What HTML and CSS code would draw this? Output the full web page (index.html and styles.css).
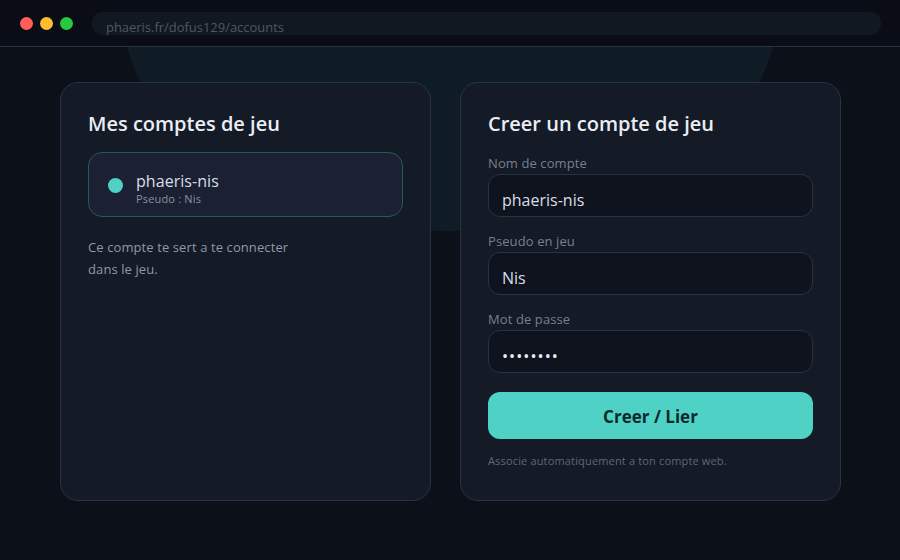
FILE: index.html
```html
<!DOCTYPE html>
<html lang="fr">
<head>
<meta charset="utf-8">
<title>Comptes de jeu</title>
<link rel="stylesheet" href="styles.css">
</head>
<body>
<div class="window">
  <header class="topbar">
    <span class="dot dot-red"></span>
    <span class="dot dot-yellow"></span>
    <span class="dot dot-green"></span>
    <div class="url">phaeris.fr/dofus129/accounts</div>
  </header>
  <main class="content">
    <div class="glow"></div>
    <section class="card card-list">
      <h2>Mes comptes de jeu</h2>
      <div class="account">
        <span class="status"></span>
        <div>
          <div class="account-name">phaeris-nis</div>
          <div class="account-sub">Pseudo : Nis</div>
        </div>
      </div>
      <p class="info">Ce compte te sert a te connecter<br>dans le jeu.</p>
    </section>
    <section class="card card-form">
      <h2>Creer un compte de jeu</h2>
      <div class="label">Nom de compte</div>
      <div class="field">phaeris-nis</div>
      <div class="label">Pseudo en jeu</div>
      <div class="field">Nis</div>
      <div class="label">Mot de passe</div>
      <div class="field field-secret">••••••••</div>
      <div class="button">Creer / Lier</div>
      <div class="hint">Associe automatiquement a ton compte web.</div>
    </section>
  </main>
</div>
</body>
</html>
```

FILE: styles.css
```css
* { box-sizing: border-box; }
html, body { margin: 0; height: 100%; }
body { background: #0c1019; font-family: "Open Sans", sans-serif; overflow: hidden; }
.window { width: 900px; height: 560px; display: flex; flex-direction: column; }
.topbar { height: 47px; flex: none; background: #0a0d15; border-bottom: 1px solid #263445; display: flex; align-items: flex-start; padding: 17px 0 0 20px; gap: 7px; }
.dot { width: 13px; height: 13px; border-radius: 50%; flex: none; }
.dot-red { background: #ff5f57; }
.dot-yellow { background: #febc2e; }
.dot-green { background: #28c840; }
.url { margin: -5px 0 0 12px; width: 789px; height: 23px; border-radius: 10px; background: #111821; color: #4d5766; font-size: 13px; letter-spacing: -0.03px; line-height: 30px; padding-left: 14px; overflow: hidden; }
.content { position: relative; flex: 1; display: flex; gap: 29px; padding: 35px 60px 0; overflow: hidden; align-items: flex-start; }
.glow { position: absolute; left: 123px; top: -256px; width: 654px; height: 440px; border-radius: 50%; background: #101c25; }
.card { position: relative; background: #141a26; border: 1px solid #263445; border-radius: 18px; height: 419px; padding: 27px; flex: none; }
.card-list { width: 371px; }
.card-form { width: 381px; }
h2 { margin: 0; font-size: 20px; line-height: 27px; font-weight: 600; color: #e9eef5; }
.account { margin-top: 15px; height: 65px; border: 1px solid #235b5a; border-radius: 14px; background: #1b2133; display: flex; align-items: center; gap: 13px; padding-left: 19px; }
.status { width: 15px; height: 15px; border-radius: 50%; background: #4fd1c5; margin-top: 2px; }
.account-name { font-size: 16px; letter-spacing: 0.05px; line-height: 20px; color: #d8dee8; margin-top: 7px; }
.account-sub { font-size: 11px; letter-spacing: 0.17px; line-height: 14px; color: #8791a1; margin-top: 1px; }
.info { margin: 19px 0 0; font-size: 13px; letter-spacing: 0.1px; line-height: 22px; color: #8f99a9; }
.label { font-size: 13px; letter-spacing: 0.1px; line-height: 18px; color: #768090; margin-top: 15px; margin-bottom: 2px; }
h2 + .label { margin-top: 17px; }
.field { height: 43px; border: 1px solid #263445; border-radius: 12px; background: #0f131d; color: #d8dee8; font-size: 16px; line-height: 50px; padding-left: 13px; overflow: hidden; }
.field-secret { color: #e9eef5; letter-spacing: 1.1px; }
.button { margin-top: 19px; height: 47px; border-radius: 12px; background: #4fd1c5; color: #0c2a2b; font-size: 17px; font-weight: 700; text-align: center; line-height: 50px; }
.hint { margin-top: 14px; font-size: 11px; letter-spacing: 0.16px; line-height: 16px; color: #5e6878; }
```
